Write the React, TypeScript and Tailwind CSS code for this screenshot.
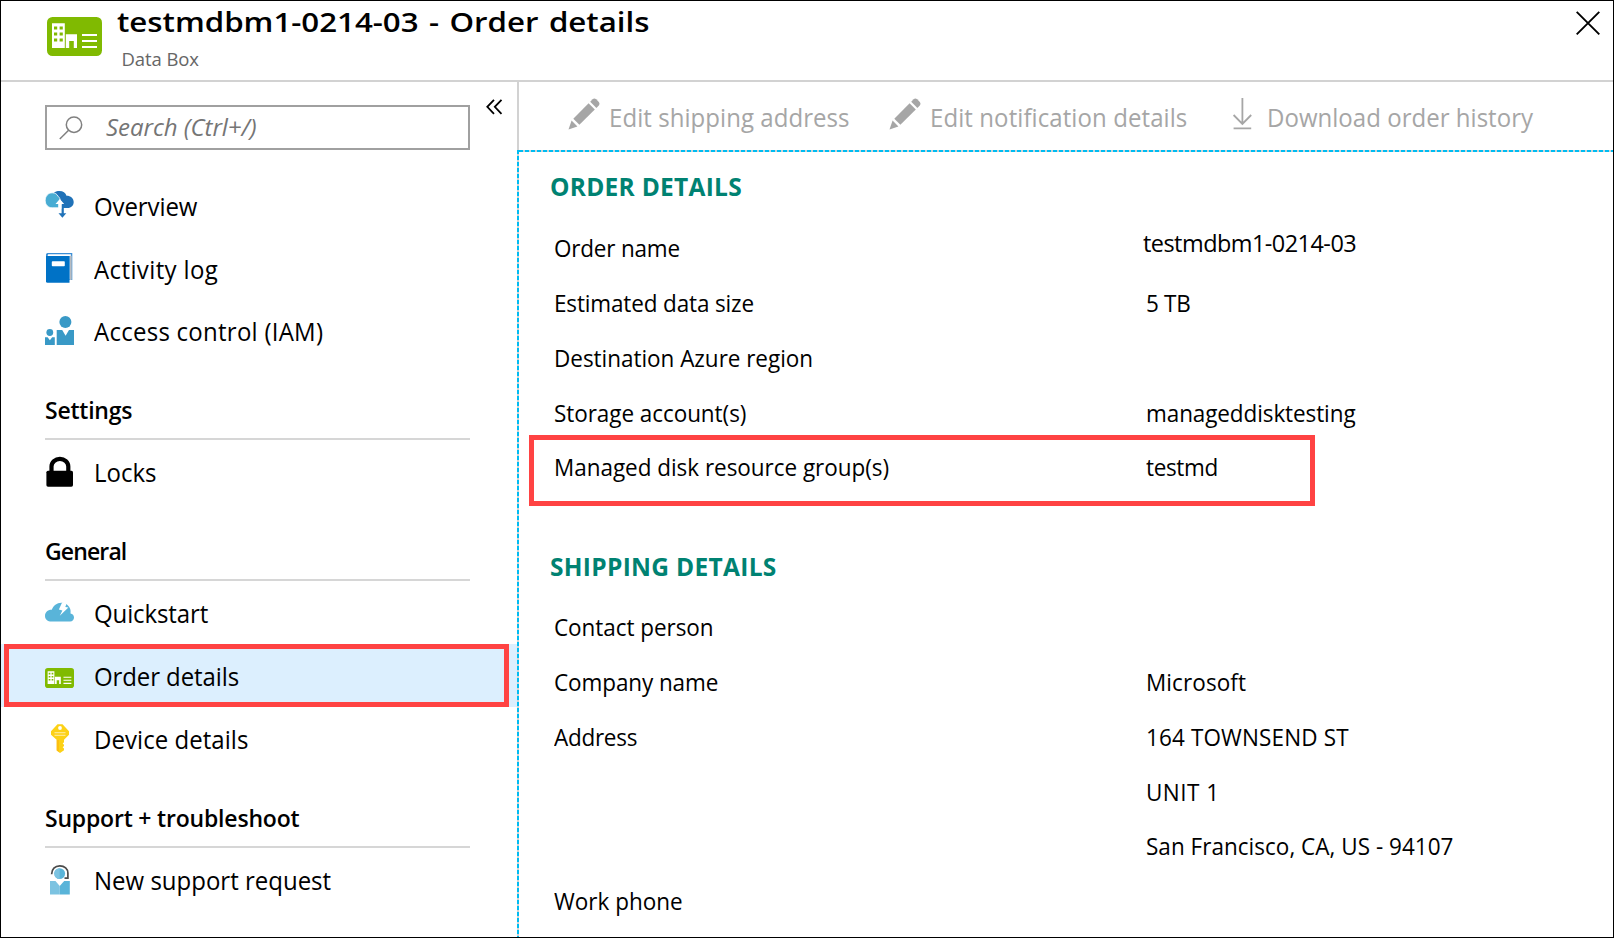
import type { ReactNode } from "react";

function BuildingCard({ className }: { className: string }) {
  return (
    <svg viewBox="0 0 55 39" className={className} preserveAspectRatio="none">
      <rect width="55" height="39" rx="5.5" fill="#80ba01" />
      <path
        fill="#fff"
        fillRule="evenodd"
        d="M5 6.3H17.8V31H5zM7 9.5v3h3.2v-3zM12.6 9.5v3h3.2v-3zM7 15.4v3h3.2v-3zM12.6 15.4v3h3.2v-3zM7 21.4v3h3.2v-3zM12.6 21.4v3h3.2v-3z"
      />
      <path fill="#fff" d="M18.8 17.3H30V31h-3.2v-7h-4.6v7h-3.4z" />
      <path stroke="#fff" strokeWidth="2" d="M35 18h15M35 24h15M35 30h15" />
    </svg>
  );
}

function Icon({ children }: { children: ReactNode }) {
  return (
    <svg viewBox="0 0 30 30" className="h-[30px] w-[30px] shrink-0 overflow-visible">
      {children}
    </svg>
  );
}

const overviewIcon = (
  <Icon>
    <path
      fill="#2072b8"
      d="M8 3.5C10 1.6 12.2 1 14.4 1c3.700 0 6.200 2 7.100 4.800C25.800 5.800 28.700 8.400 28.700 12c0 3.600-2.600 6-6 6H14z"
    />
    <path
      fill="#48acd3"
      stroke="#fff"
      strokeWidth=".8"
      d="M7.200 2.800c3 0 4.800 1.300 5.800 3.400 1.600 1.400 2.300 2.900 2.300 4.900v6.700H7.200C3.300 17.800.2 14.900.2 10.500S3.300 2.800 7.200 2.800z"
    />
    <path fill="#fff" d="M14.800 9l4.400 5h-2.600v4.500h-3.400V14h-2.700z" />
    <path fill="#2072b8" d="M16.600 14.500h2.200v8.700h2.500l-3.900 4.600-3.900-4.600h3.100z" />
    <path fill="#fff" d="M14 11h2.600v7.500H14z" />
  </Icon>
);

const activityIcon = (
  <Icon>
    <path fill="#3c8fd6" d="M2.500 0H27.300V27H24V3.200H1V1.500Q1.200 0 2.500 0z" />
    <path fill="#fff" d="M3.200 1.300H25.900V26.500H24.500V3H2.600z" />
    <path fill="#b9bcc0" d="M25 2.800h1.700v24H25z" />
    <path fill="#0072c6" d="M1 3H24.500V29.800H2.500Q1 29.800 1 28.300z" />
    <rect x="6.800" y="8.200" width="13" height="5" rx=".8" fill="#fff" />
  </Icon>
);

const accessIcon = (
  <Icon>
    <g fill="#3999c6">
      <circle cx="20.400" cy="7" r="6" />
      <path d="M11.700 15h5.500l3.400 5.800L24 15h5v15H11.700z" />
      <circle cx="4.800" cy="17.500" r="3.400" />
      <path d="M0 22.200h2.600l2.300 3 2.300-3H9.800V30H0z" />
    </g>
  </Icon>
);

const locksIcon = (
  <Icon>
    <path fill="none" stroke="#000" strokeWidth="4.200" d="M6.500 16V10.500a8.400 7.600 0 0 1 16.800 0V16" />
    <rect x="1.400" y="14.700" width="26.600" height="16" rx="1.600" fill="#000" />
  </Icon>
);

const quickstartIcon = (
  <Icon>
    <path
      fill="#59b4d9"
      d="M6.500 24.500C2.700 24.500 0 22.200 0 18.900c0-3.500 2.700-6.200 6.700-6.100C8.300 8.800 11.800 5.700 16.400 5.700c3.800 0 7.300 2.300 8.600 5.800.8 1.900.6 3.400.5 5 2.100.2 3.500 1.800 3.500 4 0 2.300-1.500 4-3.900 4z"
    />
    <path fill="#fff" d="M17.200 5.200l4.400 1.400-1.300 3.300 3.100.7-8.600 8.200 2.600-5.300-3.500-1z" />
  </Icon>
);

const orderIcon = (
  <span className="h-[30px] w-[30px] shrink-0 pt-2">
    <BuildingCard className="block h-5 w-[29px]" />
  </span>
);

const deviceIcon = (
  <Icon>
    <path
      fill="#fcd116"
      d="M12.500 1.200h5L24 8.300v3.500l-5 5v2.400l-1.300 1.300 1.300 1.300v1.300l-1.300 1.200 1.300 1.300v1.600L15 30l-3.400-2.600V16.800L6 11.800V8.300z"
    />
    <path fill="#ff8c00" opacity=".25" d="M11.600 17H14v12.200l-2.400-1.800z" />
    <circle cx="15" cy="5" r="1.900" fill="#fff" />
    <path stroke="#fde88a" strokeWidth="1.300" d="M9.500 9.700h11M9.500 12.300h11" />
  </Icon>
);

const supportIcon = (
  <Icon>
    <circle cx="14.700" cy="9.600" r="5.400" fill="#59b4d9" />
    <path fill="#7cc3e1" d="M14.700 4.200a5.400 5.400 0 0 0 0 10.800z" />
    <path fill="#7cc3e1" d="M5 17h5.500l4.200 5V30.500H5z" />
    <path fill="#59b4d9" d="M24.800 17h-5.600l-4.500 5v8.500h10.100z" />
    <path fill="none" stroke="#4b4b4b" strokeWidth="1.700" d="M6.600 10.300C6.600 5 10 1.800 14.800 1.800S22.900 5 22.900 9v5.200h-3.400" />
  </Icon>
);

function NavItem({ icon, text, tracking = "", height = "h-[63px]" }: { icon: ReactNode; text: string; tracking?: string; height?: string }) {
  return (
    <a className={`flex ${height} pl-11 pt-4`}>
      {icon}
      <span className={`ml-[19px] origin-left scale-x-[0.96] whitespace-nowrap pt-px text-[25px] leading-[30px] ${tracking}`}>
        {text}
      </span>
    </a>
  );
}

function NavHeading({ text, tracking }: { text: string; tracking: string }) {
  return (
    <div className="ml-11 h-[78px] w-[425px] border-b-2 border-[#d6d6d6] pt-7">
      <h2 className={`origin-left scale-x-[0.958] whitespace-nowrap text-[24px] font-semibold leading-10 ${tracking}`}>
        {text}
      </h2>
    </div>
  );
}

function PencilIcon() {
  return (
    <svg viewBox="0 0 32 32" className="h-8 w-8 shrink-0" fill="#a6a6a6">
      <path d="M.5 31.500L3.600 22.500 9.400 28.400z" />
      <path d="M5.300 20.700L20.600 5.200 26.800 11.400 11.400 26.800z" />
      <path d="M22.200 3.700L24.600 1.200Q26.300-.2 28.200 1.300L30.800 4Q32.200 5.800 30.800 7.400L28.400 9.900z" />
    </svg>
  );
}

function DownloadIcon() {
  return (
    <svg viewBox="0 0 20 32" className="h-8 w-5 shrink-0" fill="none" stroke="#a6a6a6" strokeWidth="1.800">
      <path d="M10.400 0V26M1.600 17l8.800 9 8.800-9M1.600 30.400h17.600" />
    </svg>
  );
}

function Field({
  label,
  lt = "",
  value,
  vt = "text-[23.5px]",
  children,
}: {
  label?: string;
  lt?: string;
  value?: string;
  vt?: string;
  children?: ReactNode;
}) {
  return (
    <div className="relative flex h-[54.75px] items-center whitespace-nowrap pl-[35px] leading-8">
      <span className={`w-[592px] shrink-0 origin-left scale-x-[0.957] text-[23.5px] ${lt}`}>{label}</span>
      <span className={`origin-left scale-x-[0.957] ${vt}`}>{value}</span>
      {children}
    </div>
  );
}

export default function App() {
  return (
    <div className="flex h-[938px] w-[1614px] flex-col overflow-hidden border border-black bg-white font-['Open_Sans','Noto_Sans',sans-serif] text-black">
      <header className="flex h-[81px] shrink-0 border-b-2 border-[#d2d2d2]">
        <BuildingCard className="ml-[46px] mt-4 h-[39px] w-[55px] shrink-0" />
        <div className="ml-[14.500px] flex-1">
          <h1 className="mt-[0.5px] origin-left scale-x-[1.157] whitespace-nowrap text-[27px] font-semibold leading-10 [word-spacing:2px]">
            testmdbm1-0214-03 - Order details
          </h1>
          <p className="ml-[5px] mt-[5px] text-[18.5px] leading-6 tracking-[-0.1px] text-[#666]">Data Box</p>
        </div>
        <svg viewBox="0 0 24 24" className="mr-[13px] mt-[10px] h-6 w-6 shrink-0" stroke="#000" strokeWidth="1.900">
          <path d="M.7.800L23.300 23.300M23.300.800L.7 23.300" />
        </svg>
      </header>

      <div className="flex min-h-0 flex-1">
        <aside className="w-[516px] shrink-0">
          <div className="flex h-[92px] pl-11">
            <div className="mt-[23px] flex h-[45px] w-[425px] shrink-0 items-center border-2 border-[#a0a0a0]">
              <svg viewBox="0 0 24 24" className="ml-3 h-6 w-6 shrink-0" fill="none" stroke="#808080" strokeWidth="1.500">
                <circle cx="15" cy="8.700" r="7.700" />
                <path d="M9.600 14.200L.8 23" />
              </svg>
              <span className="ml-[23px] pb-0.5 text-[24px] italic leading-8 tracking-[-0.05px] text-[#757575]">Search (Ctrl+/)</span>
            </div>
            <svg viewBox="0 0 17 16" className="ml-4 mt-[17px] h-4 w-[17px] shrink-0" fill="none" stroke="#000" strokeWidth="1.800">
              <path d="M8 .800L1.300 7.800 8 14.800M15.500.800L8.800 7.800l6.700 7" />
            </svg>
          </div>
          <nav>
            <NavItem icon={overviewIcon} text="Overview" tracking="tracking-[-0.1px]" />
            <NavItem icon={activityIcon} text="Activity log" tracking="tracking-[0.4px]" height="h-[62px]" />
            <NavItem icon={accessIcon} text="Access control (IAM)" tracking="tracking-[0.27px]" />
            <NavHeading text="Settings" tracking="tracking-[-0.24px]" />
            <NavItem icon={locksIcon} text="Locks" />
            <NavHeading text="General" tracking="tracking-[-0.9px]" />
            <NavItem icon={quickstartIcon} text="Quickstart" tracking="tracking-[-0.12px]" />
            <div className="relative bg-[#dceffe]">
              <NavItem icon={orderIcon} text="Order details" tracking="tracking-[-0.1px]" />
              <div className="absolute inset-y-0 left-[3px] right-2 border-[5px] border-[#ff4343]" />
            </div>
            <NavItem icon={deviceIcon} text="Device details" tracking="tracking-[0.05px]" />
            <NavHeading text="Support + troubleshoot" tracking="tracking-[-0.2px]" />
            <NavItem icon={supportIcon} text="New support request" />
          </nav>
        </aside>

        <div className="flex w-0.5 shrink-0 flex-col">
          <div className="h-[68px] bg-[#d2d2d2]" />
          <div className="flex-1 bg-[repeating-linear-gradient(180deg,#00bcf2_0_4px,#d2d2d2_4px_6px)]" />
        </div>

        <main className="min-w-0 flex-1">
          <div className="flex h-[68px] whitespace-nowrap pt-4 text-[25px] leading-8 text-[#a6a6a6]">
            <button className="ml-[49px] flex w-[321px]">
              <PencilIcon />
              <span className="ml-[9px] origin-left scale-x-[0.96] pt-[3px] tracking-[0.06px]">Edit shipping address</span>
            </button>
            <button className="flex w-[343px]">
              <PencilIcon />
              <span className="ml-[9px] origin-left scale-x-[0.96] pt-[3px] tracking-[0.09px]">Edit notification details</span>
            </button>
            <button className="flex">
              <DownloadIcon />
              <span className="ml-[15px] origin-left scale-x-[0.96] pt-[3px] tracking-[0.03px]">Download order history</span>
            </button>
          </div>
          <div className="h-0.5 bg-[repeating-linear-gradient(90deg,#00bcf2_0_4px,#d2d2d2_4px_6px)]" />

          <section>
            <h2 className="h-[69px] pl-[31px] pt-[15px] text-[24.5px] font-bold leading-10 tracking-[0.27px] text-[#008272]">
              ORDER DETAILS
            </h2>
            <Field label="Order name" lt="tracking-[-0.2px]" value="testmdbm1-0214-03" vt="-ml-[3px] pb-2.5 text-[24.5px] tracking-[-0.55px]" />
            <Field label="Estimated data size" lt="tracking-[-0.15px]" value="5 TB" vt="text-[23.5px] tracking-[-0.31px]" />
            <Field label="Destination Azure region" lt="tracking-[-0.03px]" />
            <Field label="Storage account(s)" lt="tracking-[-0.06px]" value="manageddisktesting" vt="text-[23.5px] tracking-[-0.1px]" />
            <Field label="Managed disk resource group(s)" lt="tracking-[-0.03px]" value="testmd" vt="text-[23.5px] tracking-[-0.35px]">
              <div className="absolute -top-[5px] left-[10px] h-[71px] w-[786px] border-[5px] border-[#ff4343]" />
            </Field>
          </section>

          <section>
            <h2 className="h-[105.25px] pl-[31px] pt-[52.25px] text-[24.5px] font-bold leading-10 tracking-[0.31px] text-[#008272]">
              SHIPPING DETAILS
            </h2>
            <Field label="Contact person" lt="tracking-[-0.05px]" />
            <Field label="Company name" lt="tracking-[-0.1px]" value="Microsoft" vt="text-[23.5px] tracking-[0.1px]" />
            <Field label="Address" lt="tracking-[-0.28px]" value="164 TOWNSEND ST" vt="text-[23.5px] tracking-[0.14px]" />
            <Field value="UNIT 1" vt="text-[23.5px] tracking-[0.5px]" />
            <Field value="San Francisco, CA, US - 94107" vt="text-[23.5px] tracking-[0.03px]" />
            <Field label="Work phone" />
          </section>
        </main>
      </div>
    </div>
  );
}
